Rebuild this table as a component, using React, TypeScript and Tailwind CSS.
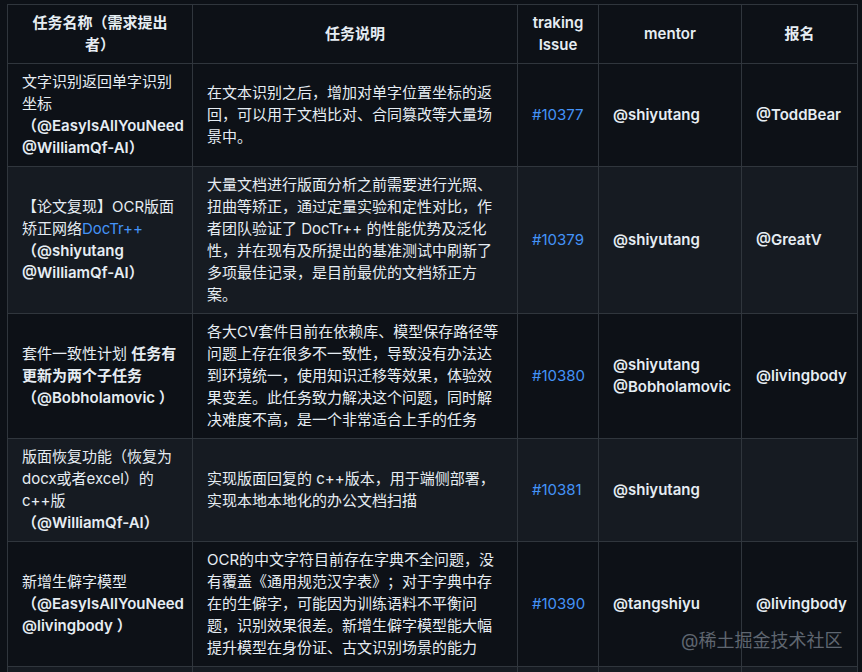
import React from 'react';

type Row = {
  name: React.ReactNode;
  desc: string;
  issue: string;
  mentor: string[];
  signup?: string;
};

const rows: Row[] = [
  {
    name: (
      <>
        文字识别返回单字识别坐标<b className="font-semibold">（@EasyIsAllYouNeed @WilliamQf-AI）</b>
      </>
    ),
    desc: '在文本识别之后，增加对单字位置坐标的返回，可以用于文档比对、合同篡改等大量场景中。',
    issue: '#10377',
    mentor: ['@shiyutang'],
    signup: '@ToddBear',
  },
  {
    name: (
      <>
        【论文复现】OCR版面矫正网络<a className="text-[#4493f8]">DocTr++</a>
        <b className="font-semibold">（@shiyutang @WilliamQf-AI）</b>
      </>
    ),
    desc: '大量文档进行版面分析之前需要进行光照、扭曲等矫正，通过定量实验和定性对比，作者团队验证了 DocTr++ 的性能优势及泛化性，并在现有及所提出的基准测试中刷新了多项最佳记录，是目前最优的文档矫正方案。',
    issue: '#10379',
    mentor: ['@shiyutang'],
    signup: '@GreatV',
  },
  {
    name: (
      <>
        套件一致性计划 <b className="font-semibold">任务有更新为两个子任务</b>
        <b className="font-semibold">（@Bobholamovic ）</b>
      </>
    ),
    desc: '各大CV套件目前在依赖库、模型保存路径等问题上存在很多不一致性，导致没有办法达到环境统一，使用知识迁移等效果，体验效果变差。此任务致力解决这个问题，同时解决难度不高，是一个非常适合上手的任务',
    issue: '#10380',
    mentor: ['@shiyutang', '@Bobholamovic'],
    signup: '@livingbody',
  },
  {
    name: (
      <>
        版面恢复功能（恢复为docx或者excel）的c++版
        <b className="font-semibold whitespace-nowrap">（@WilliamQf-AI）</b>
      </>
    ),
    desc: '实现版面回复的 c++版本，用于端侧部署，实现本地本地化的办公文档扫描',
    issue: '#10381',
    mentor: ['@shiyutang'],
  },
  {
    name: (
      <>
        新增生僻字模型<b className="font-semibold">（@EasyIsAllYouNeed @livingbody ）</b>
      </>
    ),
    desc: 'OCR的中文字符目前存在字典不全问题，没有覆盖《通用规范汉字表》；对于字典中存在的生僻字，可能因为训练语料不平衡问题，识别效果很差。新增生僻字模型能大幅提升模型在身份证、古文识别场景的能力',
    issue: '#10390',
    mentor: ['@tangshiyu'],
    signup: '@livingbody',
  },
];

const cell = 'border border-[#30363d] px-[14px] py-[7px] align-middle';

export default function App() {
  return (
    <div className="relative h-[672px] overflow-hidden bg-[#0d1117] pt-[4px] pl-[7px] font-[Inter,'Noto_Sans_CJK_SC',sans-serif] text-[15px] leading-[22px] text-[#e6edf3] [text-spacing-trim:space-all]">
      <table className="w-[850px] table-fixed border-collapse">
        <colgroup>
          <col className="w-[185px]" />
          <col className="w-[325px]" />
          <col className="w-[81px]" />
          <col className="w-[143px]" />
          <col className="w-[116px]" />
        </colgroup>
        <thead>
          <tr className="bg-[#0d1117]">
            <th className={cn(cell, 'text-center font-semibold')}>任务名称（需求提出者）</th>
            <th className={cn(cell, 'text-center font-semibold')}>任务说明</th>
            <th className={cn(cell, 'text-center font-semibold')}>traking Issue</th>
            <th className={cn(cell, 'text-center font-semibold')}>mentor</th>
            <th className={cn(cell, 'text-center font-semibold')}>报名</th>
          </tr>
        </thead>
        <tbody>
          {rows.map((row, i) => (
            <tr key={i} className={i % 2 === 1 ? 'bg-[#161b22]' : 'bg-[#0d1117]'}>
              <td className={cell}>{row.name}</td>
              <td className={cell}>{row.desc}</td>
              <td className={cell}>
                <a className="text-[#4493f8]">{row.issue}</a>
              </td>
              <td className={cn(cell, 'font-semibold')}>
                {row.mentor.map((m) => (
                  <div key={m}>{m}</div>
                ))}
              </td>
              <td className={cn(cell, 'font-semibold')}>{row.signup}</td>
            </tr>
          ))}
          <tr className="bg-[#161b22]">
            <td className={cn(cell, 'h-[100px]')}></td>
            <td className={cell}></td>
            <td className={cell}></td>
            <td className={cell}></td>
            <td className={cell}></td>
          </tr>
        </tbody>
      </table>

      {/* watermark */}
      <div className="absolute left-[681px] top-[629px] text-[18px] leading-[24px] text-[#5f6670]">@稀土掘金技术社区</div>
    </div>
  );
}

function cn(...parts: string[]) {
  return parts.join(' ');
}
